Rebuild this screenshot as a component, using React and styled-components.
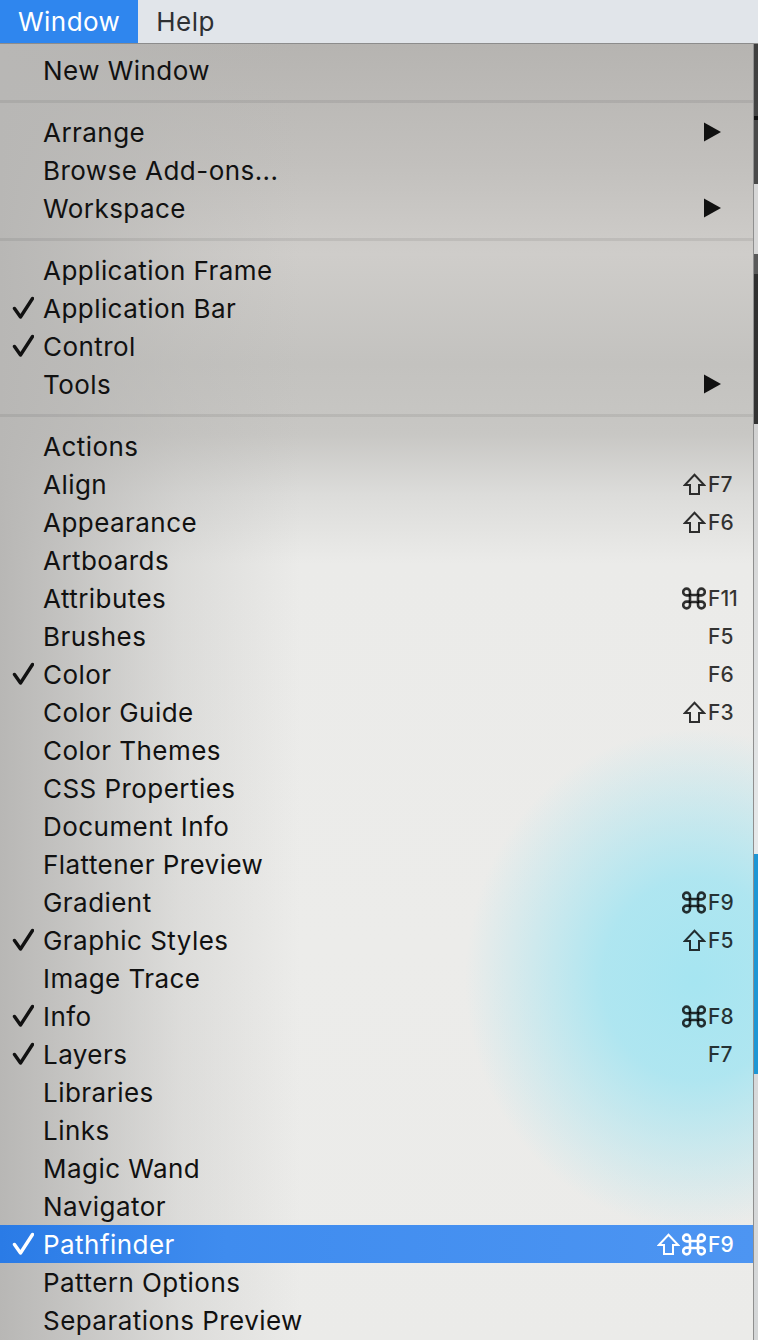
import React from "react";
import styled, { createGlobalStyle } from "styled-components";

const GlobalStyle = createGlobalStyle`
  html, body { margin: 0; padding: 0; }
  body { font-family: "Inter", "Noto Sans", sans-serif; background: #c9c8c5; }
  #root { width: 758px; height: 1340px; overflow: hidden; }
`;

const Page = styled.div`
  width: 758px;
  height: 1340px;
  display: flex;
  flex-direction: column;
  overflow: hidden;
`;

const MenuBar = styled.div`
  height: 43px;
  flex: none;
  display: flex;
  align-items: stretch;
  background: #e1e5ea;
  border-bottom: 1px solid #8c8c8c;
`;

const BarItem = styled.div`
  display: flex;
  align-items: center;
  padding: 0 18px;
  font-size: 26px;
  letter-spacing: 0.45px;
  color: ${(p) => (p.$active ? "#ffffff" : "#2e3033")};
  background: ${(p) => (p.$active ? "#2f86ee" : "transparent")};
`;

const Body = styled.div`
  flex: 1;
  display: flex;
  min-height: 0;
`;

const Menu = styled.div`
  flex: 1;
  display: flex;
  flex-direction: column;
  padding-top: 7px;
  background:
    radial-gradient(ellipse 230px 250px at 695px 935px, rgba(166, 229, 241, 1) 0%, rgba(168, 229, 241, 0.9) 40%, rgba(175, 228, 238, 0) 100%),
    linear-gradient(to right, rgba(184, 183, 181, 1) 0px, rgba(184, 183, 181, 0.75) 70px, rgba(184, 183, 181, 0.3) 180px, rgba(184, 183, 181, 0) 300px),
    linear-gradient(to bottom, #b6b4b1 0px, #c2c0bd 120px, #cfcdca 210px, #c3c2bf 320px, #c8c7c4 390px, #dcdcda 450px, #ebebe9 520px, #ececea 900px, #ebebe9 1300px);
`;

const EdgeStrip = styled.div`
  width: 4px;
  flex: none;
  border-left: 1px solid #8f8f8f;
  background: linear-gradient(
    to bottom,
    #3f3f3f 0px,
    #444 72px,
    #111 72px,
    #111 76px,
    #4a4a4a 76px,
    #4a4a4a 140px,
    #d6d6d6 140px,
    #d6d6d6 210px,
    #5a5a5a 210px,
    #5a5a5a 230px,
    #2f2f2f 230px,
    #333 380px,
    #d0d0d0 380px,
    #e6e9ea 810px,
    #1e96d4 810px,
    #1e96d4 1030px,
    #d7d9da 1030px,
    #d4d6d7 1296px
  );
`;

const Row = styled.div`
  height: 38px;
  flex: none;
  display: flex;
  align-items: center;
  padding: 0 15px 0 12px;
  color: ${(p) => (p.$selected ? "#ffffff" : "#111111")};
  background: ${(p) =>
    p.$selected ? "linear-gradient(to right, #2a7be6 0%, #3f8cef 30%, #4d95f2 100%)" : "transparent"};
`;

const CheckSlot = styled.span`
  width: 31px;
  flex: none;
  display: flex;
  align-items: center;
`;

const Label = styled.span`
  flex: 1;
  font-size: 26px;
  letter-spacing: 0.45px;
  white-space: nowrap;
`;

const Shortcut = styled.span`
  display: flex;
  align-items: center;
  color: ${(p) => (p.$selected ? "#ffffff" : "rgba(0, 0, 0, 0.78)")};
`;

const Modifiers = styled.span`
  display: flex;
  align-items: center;
  gap: 2px;
  margin-right: 2px;
`;

const KeyName = styled.span`
  width: 30px;
  font-size: 21px;
  font-weight: 500;
  white-space: nowrap;
`;

const SubArrow = styled.svg`
  margin-right: 16px;
  flex: none;
`;

const Separator = styled.div`
  height: 24px;
  flex: none;
  display: flex;
  align-items: center;
  &::after {
    content: "";
    display: block;
    width: 100%;
    height: 3px;
    background: rgba(0, 0, 0, 0.07);
  }
`;

const Check = ({ color }) => (
  <svg width="22" height="24" viewBox="0 0 22 24">
    <path d="M2.5 12.5 L8.5 21 L20.5 2.5" fill="none" stroke={color} strokeWidth="3.4" strokeLinecap="round" strokeLinejoin="round" />
  </svg>
);

const Arrow = () => (
  <SubArrow width="18" height="20" viewBox="0 0 18 20">
    <polygon points="0,0.5 17,10 0,19.5" fill="#111" />
  </SubArrow>
);

const ShiftIcon = ({ color }) => (
  <svg width="23" height="23" viewBox="0 0 23 23">
    <path d="M11.5 1.8 L21.2 12 L16 12 L16 21 L7 21 L7 12 L1.8 12 Z" fill="none" stroke={color} strokeWidth="2" strokeLinejoin="miter" />
  </svg>
);

const CmdIcon = ({ color }) => (
  <svg width="24" height="23" viewBox="0 0 24 23">
    <g fill="none" stroke={color} strokeWidth="2.6">
      <path d="M8 8 L16 8 L16 15 L8 15 Z" />
      <path d="M8 8 L8 5 A3.4 3.4 0 1 0 4.6 8.4 L8 8.4" />
      <path d="M16 8 L16 5 A3.4 3.4 0 1 1 19.4 8.4 L16 8.4" />
      <path d="M8 15 L8 18 A3.4 3.4 0 1 1 4.6 14.6 L8 14.6" />
      <path d="M16 15 L16 18 A3.4 3.4 0 1 0 19.4 14.6 L16 14.6" />
    </g>
  </svg>
);

const menu = [
  { label: "New Window" },
  "sep",
  { label: "Arrange", sub: true },
  { label: "Browse Add-ons..." },
  { label: "Workspace", sub: true },
  "sep",
  { label: "Application Frame" },
  { label: "Application Bar", check: true },
  { label: "Control", check: true },
  { label: "Tools", sub: true },
  "sep",
  { label: "Actions" },
  { label: "Align", keys: ["shift"], key: "F7" },
  { label: "Appearance", keys: ["shift"], key: "F6" },
  { label: "Artboards" },
  { label: "Attributes", keys: ["cmd"], key: "F11" },
  { label: "Brushes", key: "F5" },
  { label: "Color", check: true, key: "F6" },
  { label: "Color Guide", keys: ["shift"], key: "F3" },
  { label: "Color Themes" },
  { label: "CSS Properties" },
  { label: "Document Info" },
  { label: "Flattener Preview" },
  { label: "Gradient", keys: ["cmd"], key: "F9" },
  { label: "Graphic Styles", check: true, keys: ["shift"], key: "F5" },
  { label: "Image Trace" },
  { label: "Info", check: true, keys: ["cmd"], key: "F8" },
  { label: "Layers", check: true, key: "F7" },
  { label: "Libraries" },
  { label: "Links" },
  { label: "Magic Wand" },
  { label: "Navigator" },
  { label: "Pathfinder", check: true, selected: true, keys: ["shift", "cmd"], key: "F9" },
  { label: "Pattern Options" },
  { label: "Separations Preview" },
];

export default function App() {
  return (
    <>
      <GlobalStyle />
      <Page>
        <MenuBar>
          <BarItem $active>Window</BarItem>
          <BarItem>Help</BarItem>
        </MenuBar>
        <Body>
          <Menu>
            {menu.map((item, i) => {
              if (item === "sep") return <Separator key={i} />;
              const color = item.selected ? "#ffffff" : "rgba(0,0,0,0.8)";
              return (
                <Row key={i} $selected={item.selected}>
                  <CheckSlot>{item.check && <Check color={item.selected ? "#fff" : "#111"} />}</CheckSlot>
                  <Label>{item.label}</Label>
                  {item.sub && <Arrow />}
                  {item.key && (
                    <Shortcut $selected={item.selected}>
                      <Modifiers>
                        {(item.keys || []).map((k, j) =>
                          k === "shift" ? <ShiftIcon key={j} color={color} /> : <CmdIcon key={j} color={color} />
                        )}
                      </Modifiers>
                      <KeyName>{item.key}</KeyName>
                    </Shortcut>
                  )}
                </Row>
              );
            })}
          </Menu>
          <EdgeStrip />
        </Body>
      </Page>
    </>
  );
}
